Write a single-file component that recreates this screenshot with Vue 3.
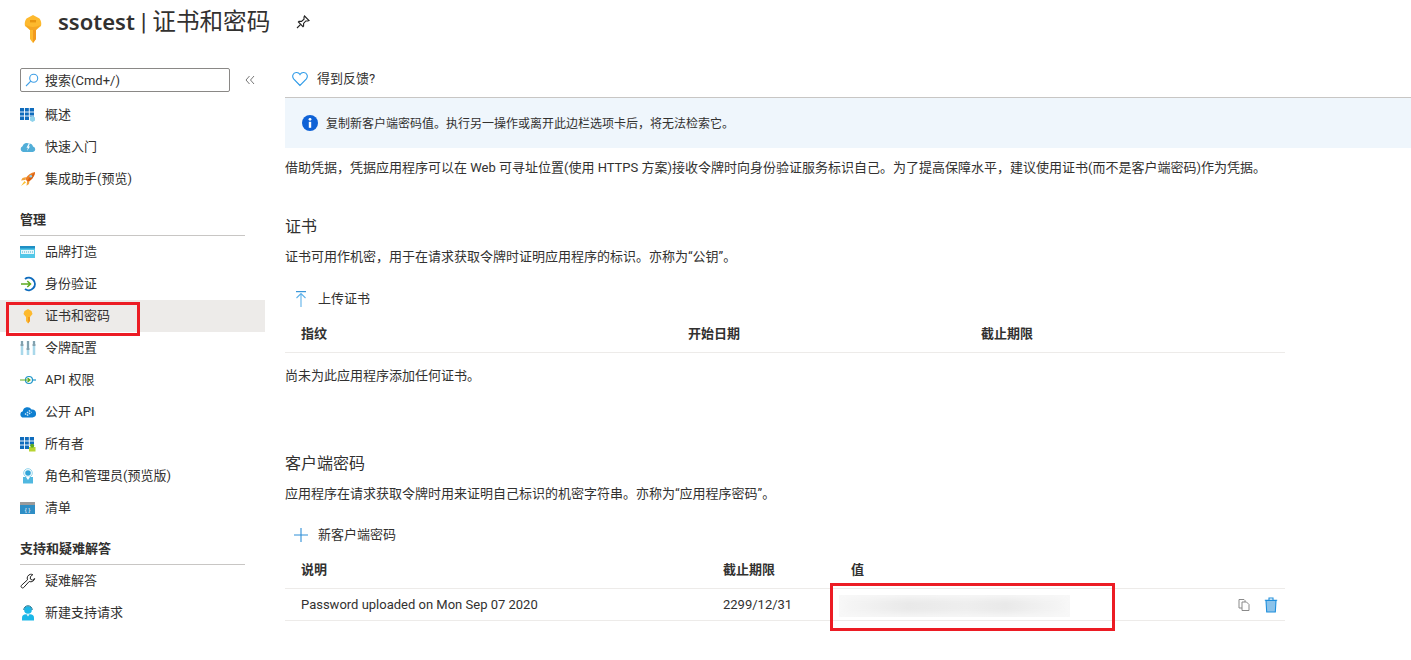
<script setup>
const groupA = [
  { t: '概述', i: 'grid' },
  { t: '快速入门', i: 'cloudbolt' },
  { t: '集成助手(预览)', i: 'rocket' },
]
const groupB = [
  { t: '品牌打造', i: 'brand' },
  { t: '身份验证', i: 'auth' },
  { t: '证书和密码', i: 'key', active: true },
  { t: '令牌配置', i: 'sliders' },
  { t: 'API 权限', i: 'api' },
  { t: '公开 API', i: 'cloudapi' },
  { t: '所有者', i: 'owner' },
  { t: '角色和管理员(预览版)', i: 'role' },
  { t: '清单', i: 'manifest' },
]
const groupC = [
  { t: '疑难解答', i: 'wrench' },
  { t: '新建支持请求', i: 'support' },
]
const groups = [
  { items: groupA },
  { title: '管理', items: groupB },
  { title: '支持和疑难解答', items: groupC },
]
</script>

<template>
  <div class="page">
    <header class="head">
      <svg class="head-key" width="20" height="30" viewBox="0 0 20 30">
        <path d="M10 1 L16.500 4.500 Q19 8 18 12 L13 16 V25 L10 29 L7 25 V16 L2 12 Q1 8 3.500 4.500 Z" fill="#fdb92e" />
        <path d="M10 16 h3 v9 l-3 4 z" fill="#f29a1f" />
        <rect x="7" y="6" width="6" height="2.400" fill="#e8950f" />
        <path d="M2.500 11 Q10 15 17.500 11 L13 16 H7 Z" fill="#f5a623" />
      </svg>
      <h1 class="title"><b>ssotest</b> | 证书和密码</h1>
      <svg class="pin" width="16" height="16" viewBox="0 0 16 16" fill="none" stroke="#222" stroke-width="1.100">
        <path d="M9.500 2 L14 6.500 L12.800 7 L10.800 7 L8.600 9.500 L8.600 12 L8 12.600 L3.400 8 L4 7.400 L6.500 7.400 L9 5.200 L9 3.200 Z" />
        <path d="M5.700 10.300 L2 14" />
      </svg>
    </header>

    <div class="body">
      <aside class="side">
        <div class="search-row">
          <div class="search">
            <svg width="14" height="14" viewBox="0 0 14 14" fill="none" stroke="#3f9fe6" stroke-width="1.100">
              <circle cx="8.700" cy="5.300" r="4" />
              <path d="M5.800 8.200 L1 13" />
            </svg>
            <span>搜索(Cmd+/)</span>
          </div>
          <svg class="collapse" width="10" height="10" viewBox="0 0 10 10" fill="none" stroke="#777" stroke-width="1">
            <path d="M4.500 1 L1 5 L4.500 9 M9 1 L5.500 5 L9 9" />
          </svg>
        </div>

        <section v-for="(g, gi) in groups" :key="gi" class="group">
          <div v-if="g.title" class="group-title">{{ g.title }}</div>
          <div v-for="it in g.items" :key="it.t" class="item" :class="{ active: it.active }">
            <svg class="ico" width="16" height="16" viewBox="0 0 16 16">
              <template v-if="it.i === 'grid'">
                <path d="M0 1h14v9H0z M0 10h9v3H0z" fill="#0f6cbd" />
                <path d="M4.500 1v12M9.300 1v9M0 5h14M0 9h14" stroke="#fff" stroke-width=".9" />
                <path d="M10 10.500 L12.500 9 L15 10.500 V13.500 L12.500 15 L10 13.500 Z" fill="#8fd3ec" />
              </template>
              <template v-else-if="it.i === 'cloudbolt'">
                <path d="M3 13 A3 3 0 0 1 2.500 7.300 A4.500 4.500 0 0 1 9 4.500 A4 4 0 0 1 13 7.500 A2.800 2.800 0 0 1 13 13 Z" fill="#51aed8" />
                <path d="M8.800 4.500 L6.500 8.700 H8 L7 12 L10 7.500 H8.500 L10 4.500 Z" fill="#fff" />
              </template>
              <template v-else-if="it.i === 'rocket'">
                <path d="M5 8 Q9 2 15 1 Q14.500 7 8 11 Z" fill="#ef7f24" />
                <path d="M10 6 L15 1 Q14.500 7 8 11 L7 10 Z" fill="#d95f12" />
                <circle cx="10.800" cy="5.200" r="1.300" fill="#8fd3ec" />
                <path d="M6 6 L2.500 7 L1 9.500 L5 9 Z M9.500 10 L9 13 L6.500 14.800 L7 11 Z" fill="#f2a33a" />
                <path d="M4.500 10 L1 15 L6 11.500 Z" fill="#fbc02d" />
              </template>
              <template v-else-if="it.i === 'brand'">
                <rect x="0" y="2" width="15" height="12" fill="#52c7e8" />
                <rect x="0" y="2" width="15" height="2.500" fill="#1f8fc4" />
                <rect x="1" y="6" width="13" height="4" fill="#e6f7fb" />
                <path d="M2 8h11" stroke="#53a9c8" stroke-dasharray="1 1" />
              </template>
              <template v-else-if="it.i === 'auth'">
                <path d="M5 3 A6.200 6.200 0 1 1 5 13" fill="none" stroke="#0f6cbd" stroke-width="2" />
                <path d="M1 8 H10 M7.300 5 L10.500 8 L7.300 11" fill="none" stroke="#5eab20" stroke-width="1.500" />
              </template>
              <template v-else-if="it.i === 'key'">
                <path d="M8 1 L11.500 3 L12.500 6 L10 9 V13 L8 15.500 L6 13 V9 L3.500 6 L4.500 3 Z" fill="#fdb92e" />
                <path d="M8 9 h2 v4 l-2 2.500 z" fill="#f29a1f" />
              </template>
              <template v-else-if="it.i === 'sliders'">
                <path d="M2 1v14M8 1v14M14 1v14" stroke="#a9d8ea" stroke-width="2.500" />
                <path d="M.5 5h3M6.500 9h3M12.500 5h3M2 1v3M8 1v7M14 1v3" stroke="#5c6a73" stroke-width="1" />
              </template>
              <template v-else-if="it.i === 'api'">
                <circle cx="9" cy="8" r="3.500" fill="#fff" stroke="#1d95c9" stroke-width="1.200" />
                <path d="M0 8 H10 M7.500 6 L10 8 L7.500 10" fill="none" stroke="#5eab20" stroke-width="1.200" />
                <path d="M12.500 8 H16" stroke="#1d95c9" stroke-width="1.200" />
              </template>
              <template v-else-if="it.i === 'cloudapi'">
                <path d="M3.500 13.500 A3.200 3.200 0 0 1 2.800 7.200 A4.700 4.700 0 0 1 11.500 5.500 A4 4 0 0 1 12.500 13.500 Z" fill="#0f7fd0" />
                <path d="M5 10.500 L10 6.500 M7 11.500 L11.500 8" stroke="#cfe9f8" stroke-width="1.500" stroke-dasharray="1.500 1" />
              </template>
              <template v-else-if="it.i === 'owner'">
                <path d="M0 1h14v9H0z M0 10h9v3H0z" fill="#0f6cbd" />
                <path d="M4.500 1v12M9.300 1v9M0 5h14M0 9h14" stroke="#fff" stroke-width=".9" />
                <rect x="9" y="11" width="6.500" height="4.500" fill="#b8d432" />
                <circle cx="12.200" cy="9.800" r="2" fill="#5eab20" />
              </template>
              <template v-else-if="it.i === 'role'">
                <circle cx="8" cy="5" r="4.300" fill="none" stroke="#8fd3ec" stroke-width="1" />
                <circle cx="8" cy="5" r="2.800" fill="#32a5d8" />
                <path d="M3 9 H13 V15.500 H3 Z" fill="#51b8e0" />
                <path d="M6 9 L8 12 L10 9 Z" fill="#fff" />
              </template>
              <template v-else-if="it.i === 'manifest'">
                <rect x="0" y="2" width="15" height="12" fill="#2f8ec5" />
                <rect x="0" y="2" width="15" height="3" fill="#9a9a9a" />
                <text x="7.500" y="12" font-size="6" fill="#fff" text-anchor="middle" font-family="Liberation Sans, sans-serif">{ }</text>
              </template>
              <template v-else-if="it.i === 'wrench'">
                <path d="M10.500 1.300 A4 4 0 0 0 7.500 6.800 L1.300 12.500 A1.600 1.600 0 0 0 3.500 14.700 L9.200 8.500 A4 4 0 0 0 14.700 5.500 L12.300 7.200 L10.300 6 L10.500 3.500 L12.800 1.700 Q11.700 1.100 10.500 1.300 Z" fill="#fff" stroke="#222" stroke-width="1" />
              </template>
              <template v-else-if="it.i === 'support'">
                <circle cx="8" cy="5" r="3.800" fill="#1bb7e8" />
                <path d="M3.800 5 A4.200 4.200 0 0 1 12.200 5" fill="none" stroke="#0b6a8a" stroke-width="1" />
                <path d="M2 15.500 V12.500 Q2 9.500 6 9.300 H10 Q14 9.500 14 12.500 V15.500 Z" fill="#1bb7e8" />
                <path d="M6.500 9.300 L8 11.500 L9.500 9.300 Z" fill="#fff" />
              </template>
            </svg>
            <span>{{ it.t }}</span>
          </div>
        </section>

        <div class="redbox side-red"></div>
      </aside>

      <main class="main">
        <div class="feedback">
          <svg width="16" height="16" viewBox="0 0 16 16" fill="none" stroke="#2f9be8" stroke-width="1.100">
            <path d="M8 14.500 L1.600 7.800 C-.2 5.500 .8 1.800 4.300 1.500 C6 1.400 7.300 2.300 8 3.600 C8.700 2.300 10 1.400 11.700 1.500 C15.200 1.800 16.200 5.500 14.400 7.800 Z" />
          </svg>
          <span>得到反馈?</span>
        </div>
        <div class="banner">
          <svg width="16" height="16" viewBox="0 0 16 16">
            <circle cx="8" cy="8" r="8" fill="#0f62d6" />
            <rect x="6.800" y="6.800" width="2.400" height="6" fill="#fff" />
            <circle cx="8" cy="4.300" r="1.400" fill="#fff" />
          </svg>
          <span>复制新客户端密码值。执行另一操作或离开此边栏选项卡后，将无法检索它。</span>
        </div>
        <p class="intro">借助凭据，凭据应用程序可以在 Web 可寻址位置(使用 HTTPS 方案)接收令牌时向身份验证服务标识自己。为了提高保障水平，建议使用证书(而不是客户端密码)作为凭据。</p>

        <section class="sec sec-cert">
          <h2>证书</h2>
          <p class="desc">证书可用作机密，用于在请求获取令牌时证明应用程序的标识。亦称为“公钥”。</p>
          <div class="cmd">
            <svg width="16" height="16" viewBox="0 0 16 16" fill="none">
              <path d="M3 .7 H13" stroke="#0f7fd0" stroke-width="1" />
              <path d="M8 16 V2.500 M3.500 7 L8 2.500 L12.500 7" stroke="#5fb2ea" stroke-width="1.100" />
            </svg>
            <span>上传证书</span>
          </div>
          <div class="thead cert-grid">
            <span>指纹</span><span>开始日期</span><span>截止期限</span>
          </div>
          <p class="empty">尚未为此应用程序添加任何证书。</p>
        </section>

        <section class="sec sec-secret">
          <h2>客户端密码</h2>
          <p class="desc">应用程序在请求获取令牌时用来证明自己标识的机密字符串。亦称为“应用程序密码”。</p>
          <div class="cmd">
            <svg width="16" height="16" viewBox="0 0 16 16" fill="none" stroke="#2f8fd8" stroke-width="1.100">
              <path d="M8 1 V15 M1 8 H15" />
            </svg>
            <span>新客户端密码</span>
          </div>
          <div class="thead secret-grid">
            <span>说明</span><span>截止期限</span><span>值</span><span></span>
          </div>
          <div class="trow secret-grid">
            <span>Password uploaded on Mon Sep 07 2020</span>
            <span>2299/12/31</span>
            <span class="blurred"></span>
            <span class="actions">
              <svg width="14" height="14" viewBox="0 0 14 14" fill="#fff" stroke="#8a8a8a" stroke-width="1">
                <path d="M2 1.500 H7 L8 2.500 V10 H2 Z" />
                <path d="M5 4 H9.500 L12 6.500 V12.500 H5 Z" />
              </svg>
              <svg width="16" height="16" viewBox="0 0 16 16">
                <path d="M3 3.500 H13 L12.300 15 H3.700 Z" fill="#8cc3ea" stroke="#1f8fdc" stroke-width="1.100" />
                <path d="M1.800 3.300 H14.200 M6 3 V1 H10 V3" fill="none" stroke="#1f8fdc" stroke-width="1.100" />
              </svg>
            </span>
          </div>
          <div class="redbox main-red"></div>
        </section>
      </main>
    </div>
  </div>
</template>

<style scoped>
.page {
  width: 1411px;
  height: 660px;
  overflow: hidden;
  background: #fff;
  color: #323130;
  font-family: Roboto, "Noto Sans CJK SC", sans-serif;
  font-size: 13px;
  line-height: 16px;
}
.head {
  height: 44px;
  display: flex;
  align-items: flex-start;
  padding: 0 0 0 23px;
}
.head-key { margin-top: 14px; flex: none; }
.title {
  margin: 6px 0 0 15px;
  font-size: 23.600px;
  line-height: 30px;
  font-weight: 400;
  color: #323130;
}
.title b {
  font-family: "Noto Sans", sans-serif;
  font-size: 22px;
  font-weight: 600;
}
.pin { margin: 14px 0 0 25px; }
.body { display: flex; height: 616px; }
.side {
  width: 265px;
  flex: none;
  position: relative;
  padding-top: 24px;
}
.search-row {
  display: flex;
  align-items: center;
  padding-left: 20px;
  height: 24px;
  margin-bottom: 7px;
}
.search {
  width: 210px;
  height: 24px;
  box-sizing: border-box;
  border: 1px solid #8a8886;
  border-radius: 2px;
  display: flex;
  align-items: center;
  gap: 6px;
  padding-left: 4px;
  color: #323130;
}
.search span { padding-top: 1px; }
.collapse { margin-left: 15px; }
.group-title {
  margin: 16px 20px 0;
  padding: 1px 0 7px;
  border-bottom: 1px solid #c8c6c4;
  font-weight: 600;
  height: 16px;
}
.item {
  height: 32px;
  display: flex;
  align-items: center;
  padding-left: 20px;
  gap: 9px;
}
.active { background: #edebe9; }
.ico { flex: none; }
.redbox {
  position: absolute;
  box-sizing: border-box;
  border: 3px solid #ec1c24;
  pointer-events: none;
}
.side-red { left: 6px; top: 258px; width: 134px; height: 34px; }
.main {
  flex: 1;
  min-width: 0;
  padding-left: 20px;
}
.feedback {
  height: 54px;
  box-sizing: border-box;
  padding: 27px 0 0 7px;
  display: flex;
  align-items: flex-start;
  gap: 9px;
  border-bottom: 1px solid #c8c6c4;
}
.banner {
  height: 50px;
  background: #eff6fc;
  display: flex;
  align-items: center;
  gap: 8px;
  padding-left: 17px;
  font-size: 12px;
}
.banner span { padding-top: 2px; }
.intro { margin: 0; padding-top: 12px; height: 16px; white-space: nowrap; }
.sec { width: 1000px; position: relative; }
.sec h2 {
  margin: 0;
  font-size: 16px;
  line-height: 20px;
  font-weight: 400;
}
.desc { margin: 0; padding-top: 12px; }
.sec-cert { padding-top: 41px; }
.cmd {
  height: 32px;
  display: flex;
  align-items: center;
  gap: 9px;
  padding-left: 8px;
  margin-top: 18px;
}
.sec-secret .cmd { margin-top: 17px; }
.thead {
  display: grid;
  height: 38px;
  align-items: center;
  font-weight: 600;
  padding-left: 16px;
  border-bottom: 1px solid #edebe9;
  box-sizing: border-box;
}
.cert-grid { grid-template-columns: 387px 293px 1fr; }
.empty { margin: 0; padding-top: 15px; height: 16px; }
.sec-secret { padding-top: 70px; }
.secret-grid { grid-template-columns: 422px 128px 1fr 60px; }
.trow {
  display: grid;
  height: 32px;
  align-items: center;
  padding-left: 16px;
  border-bottom: 1px solid #edebe9;
  box-sizing: border-box;
}
.blurred {
  width: 231px;
  height: 22px;
  margin-left: -12px;
  margin-top: 3px;
  background: linear-gradient(90deg, #f7f7f7, #e9e9e9 30%, #eeeeee 55%, #e9e9e9 72%, #f7f7f7);
  box-shadow: inset 0 0 6px 3px #f8f8f8;
}
.actions {
  display: flex;
  align-items: center;
  gap: 12px;
  justify-content: flex-end;
  padding-right: 6px;
}
.main-red { left: 545px; top: 199px; width: 285px; height: 48px; }
</style>
